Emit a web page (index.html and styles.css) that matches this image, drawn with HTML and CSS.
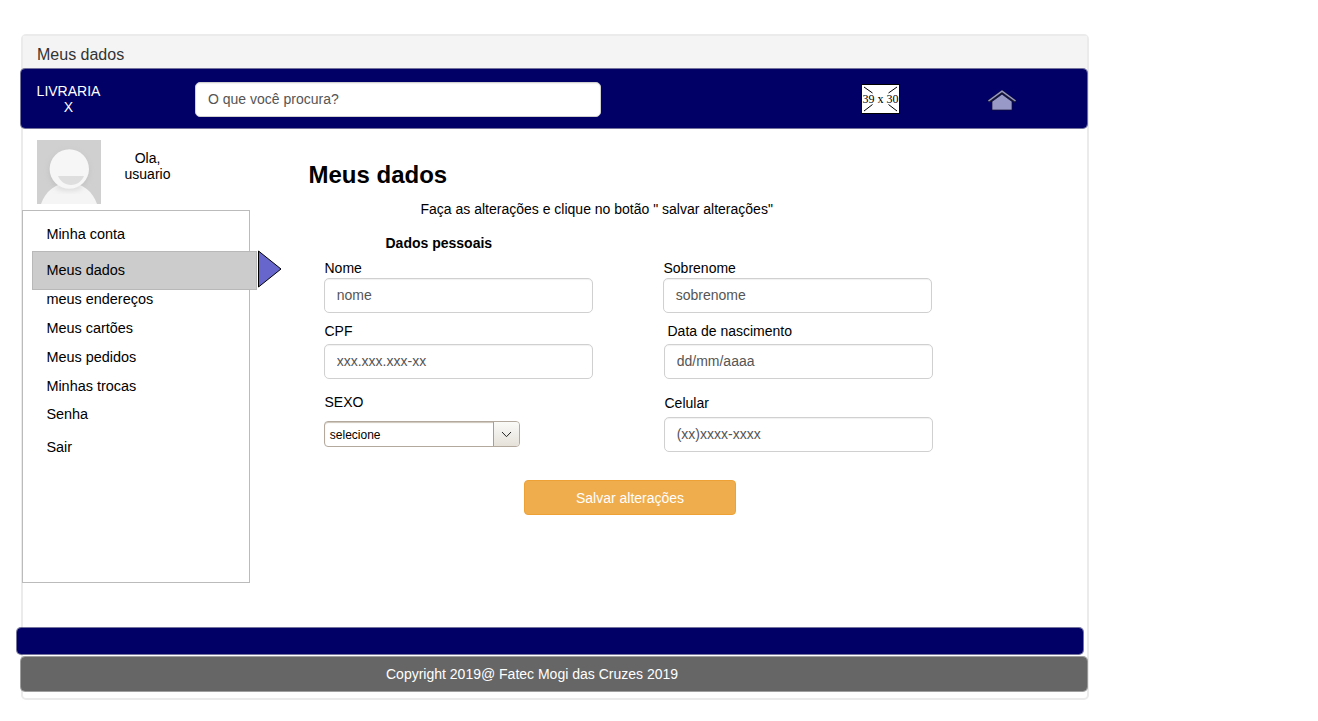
FILE: index.html
```html
<!DOCTYPE html>
<html lang="pt-BR">
<head>
<meta charset="utf-8">
<title>Meus dados</title>
<link rel="stylesheet" href="styles.css">
</head>
<body>
<div class="window">
  <div class="window-title">Meus dados</div>
  <header class="navbar">
    <div class="brand">LIVRARIA<br>X</div>
    <input class="field search" type="text" placeholder="O que você procura?">
    <svg class="thumb" width="39" height="30" viewBox="0 0 39 30">
      <rect x=".5" y=".5" width="38" height="29" fill="#fff" stroke="#000"/>
      <path d="M3 3l8.500 6M36 3l-8.500 6M3 27l8.500-6.500M36 27l-8.500-6.500" stroke="#000" fill="none"/>
      <text x="19.500" y="19" text-anchor="middle" class="thumb-text">39 x 30</text>
    </svg>
    <svg class="home" width="30" height="23" viewBox="0 0 30 23">
      <path d="M1.500 12.500L15 2.500l13.500 10" fill="none" stroke="#1a1a2a" stroke-width="3"/>
      <path d="M1.500 12L15 2.200l13.500 9.800" fill="none" stroke="#9999c8" stroke-width="1.500"/>
      <path d="M5 21v-8.500l10-7.300 10 7.300v8.500z" fill="#9999c8" stroke="#101030" stroke-width=".7"/>
    </svg>
  </header>
  <div class="content">
    <aside class="side">
      <div class="profile">
        <svg class="avatar" width="64" height="64" viewBox="0 0 64 64">
          <defs><filter id="soft" x="-30%" y="-30%" width="160%" height="160%"><feGaussianBlur stdDeviation="2.500"/></filter></defs>
          <rect width="64" height="64" fill="#d0d0d0"/>
          <circle cx="32" cy="31" r="20" fill="#b4b4b4" opacity=".5" filter="url(#soft)"/>
          <path d="M4 64C8 52 18 43 32 43s24 9 28 21z" fill="#f5f5f5"/>
          <ellipse cx="32" cy="47" rx="14" ry="4" fill="#ccc" opacity=".6" filter="url(#soft)"/>
          <circle cx="32.300" cy="29" r="19.700" fill="#f6f6f6"/>
          <path d="M21 36h26c-2 5-7 9-13 9s-11-4-13-9z" fill="#dedede"/>
        </svg>
        <div class="hello">Ola,<br>usuario</div>
      </div>
      <nav class="menu">
        <a class="item">Minha conta</a>
        <a class="item active">Meus dados<svg class="arrow" width="25" height="38" viewBox="0 0 25 38"><path d="M1.500 1l22.500 18L1.500 37z" fill="#6666cc" stroke="#000"/></svg></a>
        <a class="item">meus endereços</a>
        <a class="item">Meus cartões</a>
        <a class="item">Meus pedidos</a>
        <a class="item">Minhas trocas</a>
        <a class="item senha">Senha</a>
        <a class="item sair">Sair</a>
      </nav>
    </aside>
    <main class="main">
      <h1 class="title">Meus dados</h1>
      <p class="hint">Faça as alterações e clique no botão " salvar alterações"</p>
      <h2 class="subtitle">Dados pessoais</h2>
      <form class="form">
        <div class="column">
          <label class="label">Nome</label>
          <input class="field" type="text" placeholder="nome">
          <label class="label second">CPF</label>
          <input class="field second-field" type="text" placeholder="xxx.xxx.xxx-xx">
          <label class="label third">SEXO</label>
          <div class="select"><span class="select-value">selecione</span><span class="select-button"><svg width="11" height="7" viewBox="0 0 11 7"><path d="M1 1l4.500 4.700L10 1" fill="none" stroke="#222" stroke-width="1"/></svg></span></div>
        </div>
        <div class="column right">
          <label class="label">Sobrenome</label>
          <input class="field" type="text" placeholder="sobrenome">
          <label class="label second birth">Data de nascimento</label>
          <input class="field second-field inset" type="text" placeholder="dd/mm/aaaa">
          <label class="label phone">Celular</label>
          <input class="field phone-field inset" type="text" placeholder="(xx)xxxx-xxxx">
        </div>
      </form>
      <button class="save" type="button">Salvar alterações</button>
    </main>
  </div>
  <div class="stripe"></div>
  <footer class="footer">Copyright 2019@ Fatec Mogi das Cruzes 2019</footer>
</div>
</body>
</html>
```
FILE: styles.css
```css
* { box-sizing: border-box; }
body {
  margin: 0;
  padding: 34px 0 0 21px;
  background: #fff;
  color: #000;
  font: 14px/16px "Liberation Sans", Arial, sans-serif;
  white-space: nowrap;
}
.window {
  width: 1068px;
  height: 666px;
  border: 2px solid #ebebeb;
  border-radius: 5px;
}
.window-title {
  height: 32px;
  padding: 10px 0 0 14px;
  background: #f4f4f4;
  color: #333;
  font-size: 16px;
  line-height: 18px;
}
.navbar {
  display: flex;
  align-items: flex-start;
  width: 1068px;
  height: 61px;
  margin-left: -3px;
  border: 1px solid rgba(0, 0, 77, .55);
  border-radius: 5px;
  background: #006;
  background-clip: padding-box;
}
.brand {
  width: 65px;
  margin: 14px 0 0 15px;
  color: #fff;
  text-align: center;
}
.field {
  display: block;
  width: 269px;
  height: 35px;
  padding: 0 12px 2px 11.700px;
  border: 1px solid #d0d0d0;
  border-radius: 5px;
  background: #fff;
  box-shadow: inset 0 1px 1px rgba(0, 0, 0, .06);
  font: 14px/16px "Liberation Sans", Arial, sans-serif;
}
.field::placeholder { color: #555; opacity: 1; }
.search {
  width: 406px;
  margin: 13px 0 0 94px;
  padding-left: 12px;
}
.thumb { margin: 15px 0 0 260px; }
.thumb-text { font: 12px "Liberation Serif", "Times New Roman", serif; }
.home { margin: 20px 0 0 87px; }
.content {
  display: flex;
  height: 498px;
}
.side { width: 258px; margin-left: -1px; }
.profile {
  display: flex;
  height: 81px;
  padding: 11px 0 0 15px;
}
.hello {
  width: 60px;
  margin: 10px 0 0 16.500px;
  text-align: center;
}
.menu {
  display: flex;
  flex-direction: column;
  width: 228px;
  height: 373px;
  padding-top: 15px;
  border: 1px solid #bbb;
  font-size: 14.45px;
}
.item {
  height: 16px;
  margin-bottom: 13px;
  padding-left: 23.400px;
}
.active {
  position: relative;
  width: 225px;
  height: 39px;
  margin: -4px 0 1px 9px;
  padding: 10px 0 0 13.400px;
  border: 1px solid #b8b8b8;
  background: #ccc;
}
.active .arrow { position: absolute; left: 224px; top: -2px; }
.senha { margin-top: -1px; }
.sair { margin-top: 4px; }
.main { padding-top: 32px; }
.title {
  margin: 0 0 0 28.500px;
  font-size: 24px;
  line-height: 28px;
}
.hint { margin: 12px 0 0 140.500px; }
.subtitle {
  margin: 18px 0 9px 105.500px;
  font-size: 14px;
}
.form {
  display: flex;
  margin-left: 44px;
}
.column { width: 339px; }
.label {
  display: block;
  height: 18px;
  padding-left: .5px;
}
.second { margin-top: 10px; }
.second-field { margin-top: 3px; }
.third { margin-top: 15px; }
.birth { padding-left: 4.500px; }
.phone { margin-top: 16px; padding-left: 1.500px; }
.phone-field { margin-top: 4px; }
.inset { margin-left: 1px; }
.select {
  display: flex;
  width: 196px;
  height: 26px;
  margin-top: 9px;
  border: 1px solid #b3aa9d;
  border-radius: 4px;
  box-shadow: inset 0 1px 1px #ccc5ba;
  font-size: 12px;
  overflow: hidden;
}
.select-value { flex: 1; padding: 5px 0 0 4.800px; }
.select-button {
  display: flex;
  align-items: center;
  justify-content: center;
  width: 26px;
  padding-top: 1px;
  border-left: 1px solid #a89f91;
  background: linear-gradient(#fafaf8, #e6e2da);
}
.save {
  display: block;
  width: 212px;
  height: 35px;
  margin: 28px 0 0 244px;
  border: 1px solid #eea236;
  border-radius: 4px;
  background: #f0ad4e;
  color: #fff;
  font: 14px/16px "Liberation Sans", Arial, sans-serif;
}
.stripe {
  width: 1068px;
  height: 28px;
  margin-left: -7px;
  border: 1px solid rgba(0, 0, 77, .55);
  border-radius: 5px;
  background: #006;
  background-clip: padding-box;
}
.footer {
  width: 1068px;
  height: 36px;
  margin: 1px 0 0 -3px;
  padding: 9px 0 0 365px;
  border: 1px solid rgba(80, 80, 80, .55);
  border-radius: 5px;
  background: #666;
  background-clip: padding-box;
  color: #fff;
}
```
